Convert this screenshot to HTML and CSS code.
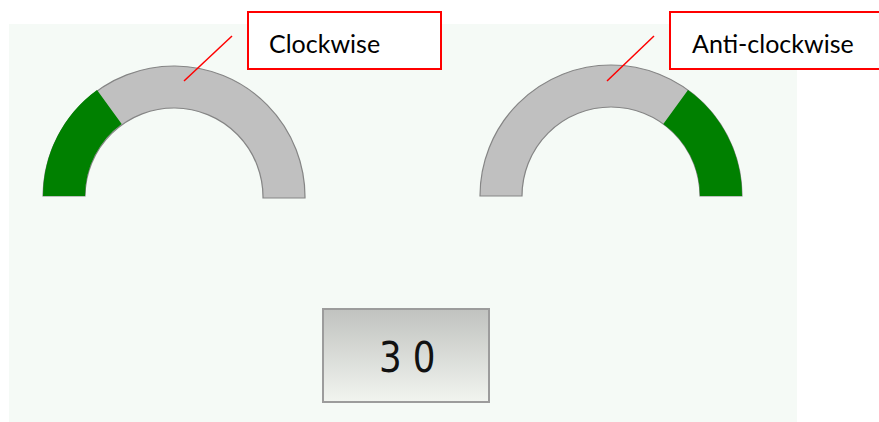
FILE: index.html
```
<!DOCTYPE html>
<html lang="en">

<head>
  <meta charset="UTF-8">
  <title>Gauge direction</title>
  <link rel="stylesheet" href="styles.css">
</head>

<body>
  <div class="stage">
    <div class="panel">
      <div class="gauges">
        <!-- value 30 of 100, filled from the left -->
        <svg class="gauge" width="264" height="140" viewBox="0 0 264 140">
          <path class="track" d="M1 132 A131 131 0 0 1 263 134 L221 134 A89 89 0 0 0 43 132 Z" />
          <path class="fill" d="M1 132 A131 131 0 0 1 55 26 L79.7 60 A89 89 0 0 0 43 132 Z" />
        </svg>
        <!-- value 30 of 100, filled from the right -->
        <svg class="gauge" width="264" height="140" viewBox="0 0 264 140">
          <path class="track" d="M1 132 A131 131 0 0 1 263 132 L221 132 A89 89 0 0 0 43 132 Z" />
          <path class="fill" d="M263 132 A131 131 0 0 0 209 26 L184.3 60 A89 89 0 0 1 221 132 Z" />
        </svg>
      </div>
      <div class="readout"><span>30</span></div>
    </div>

    <svg class="leaders" width="879" height="422">
      <line x1="232" y1="36" x2="184" y2="81" />
      <line x1="654" y1="36" x2="607" y2="81" />
    </svg>
    <div class="callout callout-cw">Clockwise</div>
    <div class="callout callout-acw">Anti-clockwise</div>
  </div>
</body>

</html>
```

FILE: styles.css
```
body {
  margin: 0;
  background: #fff;
  font-family: Lato, "Liberation Sans", sans-serif;
}

.stage {
  position: relative;
  width: 879px;
  height: 422px;
  overflow: hidden;
}

.panel {
  margin: 24px 0 0 9px;
  width: 788px;
  height: 398px;
  background: #f5faf6;
}

.gauges {
  display: flex;
  gap: 173px;
  padding: 40px 0 0 33px;
}

.gauge .track {
  fill: #c0c0c0;
  stroke: #858585;
  stroke-width: 1.2;
}

.gauge .fill {
  fill: #008000;
}

.readout {
  box-sizing: border-box;
  width: 168px;
  height: 95px;
  margin: 104px 0 0 313px;
  padding-top: 4px;
  border: 2px solid #9c9c9c;
  background: linear-gradient(#c1c3c0, #f1f4ef);
  display: flex;
  align-items: center;
  justify-content: center;
  font: 42px "DejaVu Sans", sans-serif;
  color: #111;
}

.readout span {
  display: inline-block;
  letter-spacing: 13px;
  margin-right: -13px;
  transform: scaleX(0.85);
}

.leaders {
  position: absolute;
  left: 0;
  top: 0;
}

.leaders line {
  stroke: #f00;
  stroke-width: 1.5;
}

.callout {
  position: absolute;
  top: 11px;
  box-sizing: border-box;
  height: 59px;
  padding-top: 4px;
  border: 2px solid #f00;
  background: #fff;
  font-size: 25px;
  line-height: 52px;
  color: #000;
}

.callout-cw {
  left: 247px;
  width: 195px;
  padding-left: 20px;
}

.callout-acw {
  left: 669px;
  width: 212px;
  padding-left: 21px;
}
```
